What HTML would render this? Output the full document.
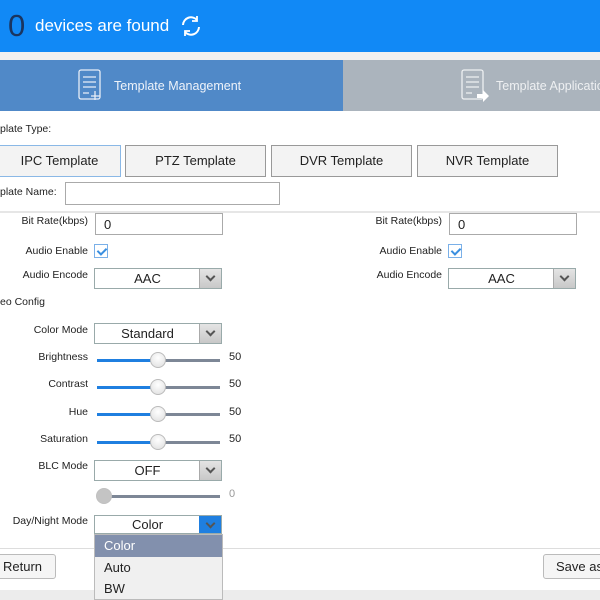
<!DOCTYPE html>
<html><head><style>
*{margin:0;padding:0;box-sizing:border-box}
body{width:600px;height:600px;overflow:hidden;position:relative;background:#fff;font-family:"Liberation Sans",sans-serif;color:#222}
.a{position:absolute;white-space:nowrap}
.lbl{position:absolute;font-size:10.5px;text-align:right;width:88px;left:0;white-space:nowrap}
.lblr{position:absolute;font-size:10.5px;text-align:right;width:88px;left:354px;white-space:nowrap}
.inp{position:absolute;border:1px solid #aaa;background:#fff;font-size:13px;padding:3px 8px}
.sel{position:absolute;border:1px solid #9aa;background:#fff;font-size:13px;text-align:center;width:128px;height:21px;line-height:19px}
.sel span{display:block;width:105px}
.arr{position:absolute;right:0;top:0;width:22px;height:19px;background:linear-gradient(#e4e4e4,#c8c8c8);border-left:1px solid #aaa}
.arr:after{content:"";position:absolute;left:7px;top:4px;width:5px;height:5px;border-right:2px solid #555;border-bottom:2px solid #555;transform:rotate(45deg)}
.btn{position:absolute;top:145px;height:32px;border:1px solid #999;background:#f3f3f3;font-size:13px;text-align:center;line-height:30px}
.trk{position:absolute;left:97px;width:123px;height:3px;background:#7d8796}
.trk i{position:absolute;left:0;top:0;height:3px;width:60px;background:#1f7fe0}
.th{position:absolute;width:16px;height:16px;border-radius:50%;background:radial-gradient(circle at 50% 35%,#fff,#ddd);border:1px solid #bbb}
.val{position:absolute;left:229px;font-size:11px}
.chk{position:absolute;width:14px;height:14px;border:1px solid #7ab0e8;background:#fff}
.chk:after{content:"";position:absolute;left:4px;top:1px;width:4px;height:7px;border-right:2px solid #3a8fe0;border-bottom:2px solid #3a8fe0;transform:rotate(45deg)}
</style></head><body>
<div class="a" style="left:0;top:0;width:600px;height:52px;background:#1189f6"></div>
<div class="a" style="left:8px;top:8px;font-size:31px;color:#1a3560">0</div>
<div class="a" style="left:35px;top:16px;font-size:17px;color:#fff">devices are found</div>
<svg class="a" style="left:178px;top:13px" width="26" height="26" viewBox="0 0 26 26" fill="none" stroke="#fff" stroke-width="2"><path d="M5 12a8 8 0 0 1 14-5M21 14a8 8 0 0 1-14 5"/><path d="M19 3v5h-5M7 23v-5h5" stroke-width="1.8"/></svg>
<div class="a" style="left:0;top:52px;width:600px;height:8px;background:#f0f0f0"></div>
<div class="a" style="left:0;top:60px;width:343px;height:51px;background:#5089c8"></div>
<div class="a" style="left:343px;top:60px;width:257px;height:51px;background:#abb4bd"></div>
<svg class="a" style="left:78px;top:69px" width="28" height="34" viewBox="0 0 28 34" fill="none" stroke="#e8eef7" stroke-width="1.3"><rect x="1" y="1" width="21" height="29" rx="2"/><path d="M5 8h13M5 13h13M5 18h13M5 24h6M17 22v9M13 27h9"/></svg>
<div class="a" style="left:114px;top:79px;font-size:12.5px;color:#eef3fa">Template Management</div>
<svg class="a" style="left:461px;top:69px" width="30" height="34" viewBox="0 0 30 34" fill="none" stroke="#eef0f2" stroke-width="1.3"><rect x="1" y="1" width="21" height="29" rx="2"/><path d="M5 8h13M5 13h13M5 18h13M5 24h6"/><path d="M16 25h6v-4l6 6-6 6v-4h-6z" fill="#fff" stroke="none"/></svg>
<div class="a" style="left:496px;top:79px;font-size:12.5px;color:#eef0f2">Template Application</div>
<div class="a" style="left:0;top:123px;font-size:10.5px">plate Type:</div>
<div class="btn" style="left:-2px;width:123px;border-color:#8ab8e6">IPC Template</div>
<div class="btn" style="left:125px;width:141px">PTZ Template</div>
<div class="btn" style="left:271px;width:141px">DVR Template</div>
<div class="btn" style="left:417px;width:141px">NVR Template</div>
<div class="a" style="left:0;top:186px;font-size:10.5px">plate Name:</div>
<div class="inp" style="left:65px;top:182px;width:215px;height:23px"></div>
<div class="a" style="left:0;top:211px;width:600px;height:2px;background:#e6e6e6"></div>
<div class="lbl" style="top:215px">Bit Rate(kbps)</div>
<div class="inp" style="left:95px;top:213px;width:128px;height:22px">0</div>
<div class="lblr" style="top:215px">Bit Rate(kbps)</div>
<div class="inp" style="left:449px;top:213px;width:128px;height:22px">0</div>
<div class="lbl" style="top:245px">Audio Enable</div>
<div class="chk" style="left:94px;top:244px"></div>
<div class="lblr" style="top:245px">Audio Enable</div>
<div class="chk" style="left:448px;top:244px"></div>
<div class="lbl" style="top:269px">Audio Encode</div>
<div class="sel" style="left:94px;top:268px"><span>AAC</span><div class="arr"></div></div>
<div class="lblr" style="top:269px">Audio Encode</div>
<div class="sel" style="left:448px;top:268px"><span>AAC</span><div class="arr"></div></div>
<div class="a" style="left:0;top:296px;font-size:10.5px">eo Config</div>
<div class="lbl" style="top:324px">Color Mode</div>
<div class="sel" style="left:94px;top:323px"><span>Standard</span><div class="arr"></div></div>
<div class="lbl" style="top:351px">Brightness</div>
<div class="trk" style="top:359px"><i></i></div><div class="th" style="left:150px;top:352px"></div><div class="val" style="top:351px">50</div>
<div class="lbl" style="top:378px">Contrast</div>
<div class="trk" style="top:386px"><i></i></div><div class="th" style="left:150px;top:379px"></div><div class="val" style="top:378px">50</div>
<div class="lbl" style="top:406px">Hue</div>
<div class="trk" style="top:413px"><i></i></div><div class="th" style="left:150px;top:406px"></div><div class="val" style="top:406px">50</div>
<div class="lbl" style="top:433px">Saturation</div>
<div class="trk" style="top:441px"><i></i></div><div class="th" style="left:150px;top:434px"></div><div class="val" style="top:433px">50</div>
<div class="lbl" style="top:460px">BLC Mode</div>
<div class="sel" style="left:94px;top:460px"><span>OFF</span><div class="arr"></div></div>
<div class="trk" style="top:495px;left:104px;width:116px"></div><div class="th" style="left:96px;top:488px;background:#c4c4c4;border-color:#c0c0c0"></div><div class="val" style="top:488px;color:#999">0</div>
<div class="lbl" style="top:515px">Day/Night Mode</div>
<div class="sel" style="left:94px;top:515px;height:19px;line-height:17px"><span>Color</span><div class="arr" style="height:17px;background:#1f7fe0;border-color:#1f7fe0"></div></div>
<div class="a" style="left:0;top:548px;width:600px;height:1px;background:#ddd"></div>
<div class="a" style="left:-4px;top:554px;width:60px;height:25px;border:1px solid #bbb;border-radius:3px;background:#f5f5f5;font-size:13px;line-height:23px;padding-left:6px">Return</div>
<div class="a" style="left:543px;top:554px;width:70px;height:25px;border:1px solid #bbb;border-radius:3px;background:#f5f5f5;font-size:13px;line-height:23px;padding-left:12px">Save as</div>
<div class="a" style="left:0;top:590px;width:600px;height:10px;background:#ececec"></div>
<div class="a" style="left:94px;top:534px;width:129px;height:66px;background:#f0f0f0;border:1px solid #bbb;font-size:13px">
<div style="background:#8290ad;color:#fff;height:22px;line-height:22px;padding-left:9px">Color</div>
<div style="height:21px;line-height:21px;padding-left:9px">Auto</div>
<div style="height:21px;line-height:21px;padding-left:9px">BW</div></div>
</body></html>
